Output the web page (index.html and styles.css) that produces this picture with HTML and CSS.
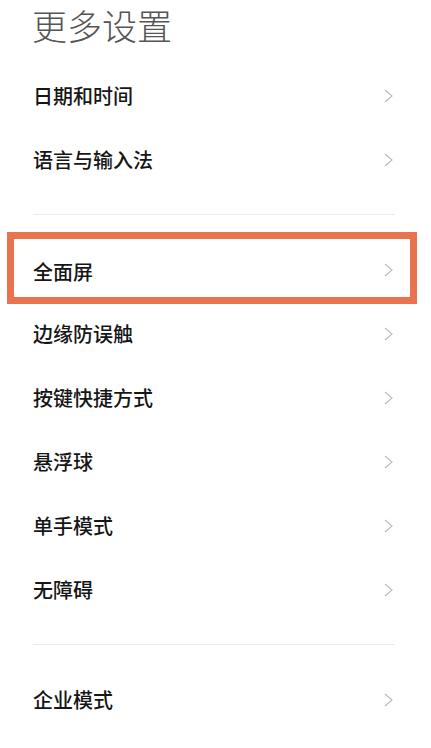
FILE: index.html
```html
<!DOCTYPE html>
<html lang="zh-CN">
<head>
<meta charset="utf-8">
<title>更多设置</title>
<link rel="stylesheet" href="styles.css">
</head>
<body>
<div class="page">
  <h1 class="title">更多设置</h1>
  <div class="group">
    <div class="row"><span class="label">日期和时间</span><svg class="chev" viewBox="0 0 9 14"><polyline points="1,1 8,7 1,13"/></svg></div>
    <div class="row"><span class="label">语言与输入法</span><svg class="chev" viewBox="0 0 9 14"><polyline points="1,1 8,7 1,13"/></svg></div>
  </div>
  <div class="divider"></div>
  <div class="group">
    <div class="row highlighted"><span class="label">全面屏</span><svg class="chev" viewBox="0 0 9 14"><polyline points="1,1 8,7 1,13"/></svg><span class="mark"></span></div>
    <div class="row"><span class="label">边缘防误触</span><svg class="chev" viewBox="0 0 9 14"><polyline points="1,1 8,7 1,13"/></svg></div>
    <div class="row"><span class="label">按键快捷方式</span><svg class="chev" viewBox="0 0 9 14"><polyline points="1,1 8,7 1,13"/></svg></div>
    <div class="row"><span class="label">悬浮球</span><svg class="chev" viewBox="0 0 9 14"><polyline points="1,1 8,7 1,13"/></svg></div>
    <div class="row"><span class="label">单手模式</span><svg class="chev" viewBox="0 0 9 14"><polyline points="1,1 8,7 1,13"/></svg></div>
    <div class="row"><span class="label">无障碍</span><svg class="chev" viewBox="0 0 9 14"><polyline points="1,1 8,7 1,13"/></svg></div>
  </div>
  <div class="divider"></div>
  <div class="group">
    <div class="row"><span class="label">企业模式</span><svg class="chev" viewBox="0 0 9 14"><polyline points="1,1 8,7 1,13"/></svg></div>
  </div>
</div>
</body>
</html>
```
FILE: styles.css
```css
html, body {
  margin: 0;
  padding: 0;
  background: #ffffff;
}
body {
  font-family: "Noto Sans CJK SC", "Noto Sans", sans-serif;
  width: 431px;
  height: 748px;
  overflow: hidden;
}
.page {
  display: flex;
  flex-direction: column;
}
.title {
  margin: 0;
  height: 64px;
  box-sizing: border-box;
  padding: 7px 0 0 32px;
  font-size: 35px;
  line-height: 36px;
  font-weight: 300;
  color: #555555;
  letter-spacing: 0;
}
.group {
  display: flex;
  flex-direction: column;
}
.row {
  position: relative;
  height: 64px;
  display: flex;
  align-items: center;
  justify-content: space-between;
  padding: 0 38px 0 33px;
}
.label {
  font-size: 20px;
  line-height: 24px;
  font-weight: 500;
  color: #161616;
}
.chev {
  width: 9px;
  height: 14px;
  fill: none;
  stroke: #b9b9b9;
  stroke-width: 1.1;
}
.divider {
  height: 1px;
  background: #ececec;
  margin: 22px 36px 23px 33px;
}
.highlighted .label {
  padding-top: 4px;
}
.mark {
  position: absolute;
  left: 7px;
  right: 14px;
  top: -6px;
  bottom: -2px;
  border: 7px solid #e8734c;
  pointer-events: none;
}
```
